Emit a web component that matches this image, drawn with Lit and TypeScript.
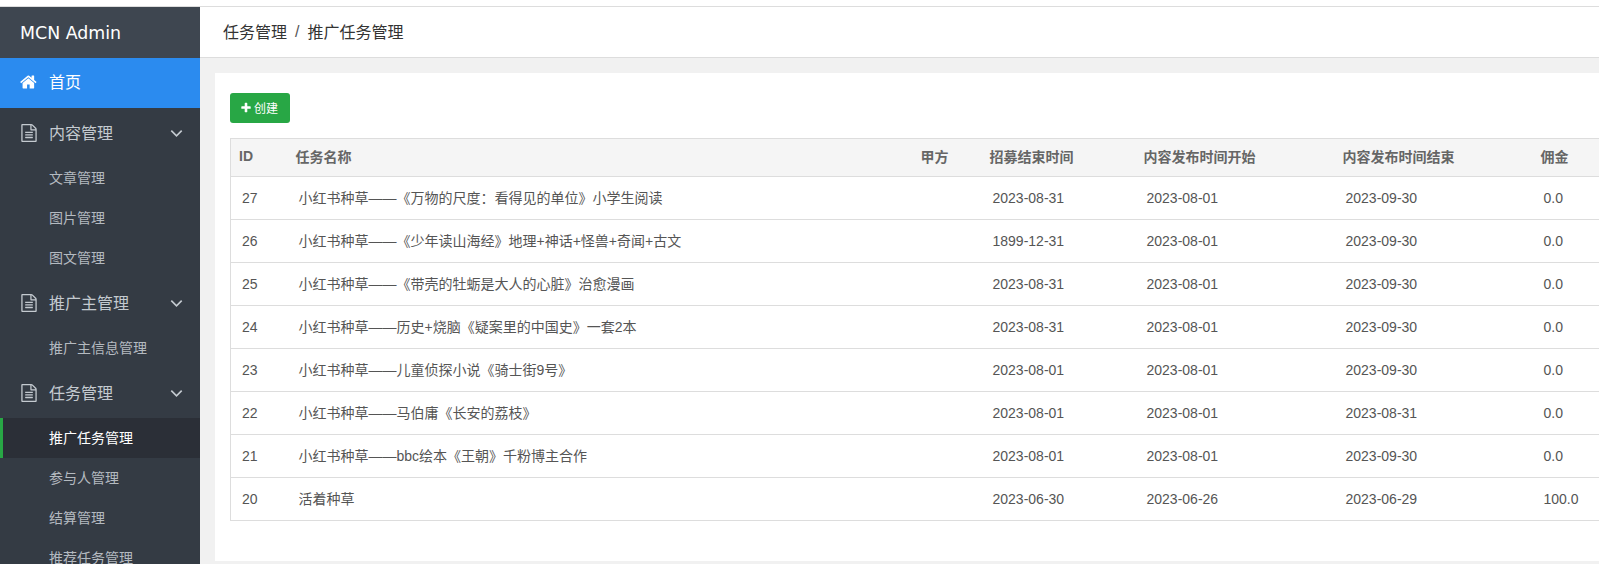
import { LitElement, html, css, svg } from "lit";
import { customElement } from "lit/decorators.js";

const HOME = "M1408 992v480q0 26-19 45t-45 19h-384v-384h-256v384h-384q-26 0-45-19t-19-45v-480q0-1 .5-3t.5-3l575-474 575 474q1 2 1 6zm223-69l-62 74q-8 9-21 11h-3q-13 0-21-7l-692-577-692 577q-12 8-24 7-13-2-21-11l-62-74q-8-10-7-23.5t11-21.5l719-599q32-26 76-26t76 26l244 204v-195q0-14 9-23t23-9h192q14 0 23 9t9 23v408l219 182q10 8 11 21.5t-7 23.5z";
const FILE = "M1596 380q28 28 48 76t20 88v1152q0 40-28 68t-68 28h-1344q-40 0-68-28t-28-68v-1600q0-40 28-68t68-28h896q40 0 88 20t76 48zm-444-244v376h376q-10-29-22-41l-313-313q-12-12-41-22zm384 1528v-1024h-416q-40 0-68-28t-28-68v-416h-768v1536h1280zm-1024-864q0-14 9-23t23-9h704q14 0 23 9t9 23v64q0 14-9 23t-23 9h-704q-14 0-23-9t-9-23v-64zm736 224q14 0 23 9t9 23v64q0 14-9 23t-23 9h-704q-14 0-23-9t-9-23v-64q0-14 9-23t23-9h704zm0 256q14 0 23 9t9 23v64q0 14-9 23t-23 9h-704q-14 0-23-9t-9-23v-64q0-14 9-23t23-9h704z";
const PLUS = "M1600 736v192q0 40-28 68t-68 28h-416v416q0 40-28 68t-68 28h-192q-40 0-68-28t-28-68v-416h-416q-40 0-68-28t-28-68v-192q0-40 28-68t68-28h416v-416q0-40 28-68t68-28h192q40 0 68 28t28 68v416h416q40 0 68 28t28 68z";

const icon = (d: string, cls: string) => html`<svg class=${cls} viewBox="0 0 1792 1792" aria-hidden="true">${svg`<path d=${d} fill="currentColor"></path>`}</svg>`;
const chevron = html`<svg class="chev" viewBox="0 0 12 8" aria-hidden="true">${svg`<path d="M1.2 1.4 6 6.2 10.8 1.4" fill="none" stroke="currentColor" stroke-width="1.5"></path>`}</svg>`;

const NAV = [
  { title: "内容管理", subs: ["文章管理", "图片管理", "图文管理"] },
  { title: "推广主管理", subs: ["推广主信息管理"] },
  { title: "任务管理", subs: ["推广任务管理", "参与人管理", "结算管理", "推荐任务管理"] },
];

const ROWS = [
  ["27", "小红书种草——《万物的尺度：看得见的单位》小学生阅读", "", "2023-08-31", "2023-08-01", "2023-09-30", "0.0"],
  ["26", "小红书种草——《少年读山海经》地理+神话+怪兽+奇闻+古文", "", "1899-12-31", "2023-08-01", "2023-09-30", "0.0"],
  ["25", "小红书种草——《带壳的牡蛎是大人的心脏》治愈漫画", "", "2023-08-31", "2023-08-01", "2023-09-30", "0.0"],
  ["24", "小红书种草——历史+烧脑《疑案里的中国史》一套2本", "", "2023-08-31", "2023-08-01", "2023-09-30", "0.0"],
  ["23", "小红书种草——儿童侦探小说《骑士街9号》", "", "2023-08-01", "2023-08-01", "2023-09-30", "0.0"],
  ["22", "小红书种草——马伯庸《长安的荔枝》", "", "2023-08-01", "2023-08-01", "2023-08-31", "0.0"],
  ["21", "小红书种草——bbc绘本《王朝》千粉博主合作", "", "2023-08-01", "2023-08-01", "2023-09-30", "0.0"],
  ["20", "活着种草", "", "2023-06-30", "2023-06-26", "2023-06-29", "100.0"],
];
const HEAD = ["ID", "任务名称", "甲方", "招募结束时间", "内容发布时间开始", "内容发布时间结束", "佣金"];
const WIDTHS = ["w-id", "w-name", "w-party", "w-rec", "w-start", "w-end", "w-fee"];

@customElement("app-root")
export class AppRoot extends LitElement {
  static styles = css`
    :host {
      display: flex;
      flex-direction: column;
      width: 1599px;
      height: 564px;
      overflow: hidden;
      background: #fff;
      font-family: "Liberation Sans", "Noto Sans CJK SC", sans-serif;
      color: #555;
    }
    .topgap { flex: none; height: 6px; background: #fff; border-bottom: 1px solid #ddd; }
    .shell { flex: 1; display: flex; min-height: 0; }
    .side { flex: none; width: 200px; background: #343b44; overflow: hidden; color: #c4cad0; }
    .logo {
      height: 51px;
      box-sizing: border-box;
      padding: 1px 0 0 20px;
      background: #3e4650;
      color: #fff;
      font: 17.4px/50px "DejaVu Sans", sans-serif;
    }
    .item {
      height: 50px;
      box-sizing: border-box;
      display: flex;
      align-items: center;
      padding: 0 0 2px 20px;
      font-size: 16px;
    }
    .item.home { background: #2b8bef; color: #fff; padding-bottom: 4px; }
    .i { width: 18px; height: 18px; flex: none; margin: 2px 11px 0 0; }
    .chev { width: 13px; height: 9px; margin: 2px 17px 0 auto; }
    .sub {
      height: 40px;
      box-sizing: border-box;
      display: flex;
      align-items: center;
      padding: 0 0 2px 49px;
      font-size: 14px;
      color: #b4bac0;
    }
    .sub.on { background: #2b2f37; color: #fff; border-left: 3px solid #28a745; padding-left: 46px; }
    .main { flex: 1; min-width: 0; display: flex; flex-direction: column; background: #f1f1f1; }
    .crumb {
      flex: none;
      height: 50px;
      box-sizing: content-box;
      background: #fff;
      border-bottom: 1px solid #ddd;
      display: flex;
      align-items: center;
      padding-left: 23px;
      font-size: 16px;
      color: #333;
    }
    .crumb span { position: relative; top: -1px; }
    .crumb .sep { margin: 0 8px; color: #555; top: 0; }
    .card { margin: 15px 0 3px 15px; flex: 1; background: #fff; padding: 20px 0 0 15px; overflow: hidden; }
    .btn {
      display: flex;
      align-items: center;
      gap: 2px;
      width: 60px;
      height: 30px;
      box-sizing: border-box;
      padding: 0 0 2px 10px;
      border: 0;
      border-radius: 3px;
      background: #28a745;
      color: #fff;
      font: 12px "Liberation Sans", "Noto Sans CJK SC", sans-serif;
    }
    .btn svg { width: 12px; height: 12px; margin-top: 2px; }
    table {
      margin-top: 15px;
      width: 1420px;
      table-layout: fixed;
      border-collapse: collapse;
      border: 1px solid #ddd;
      font-size: 14px;
    }
    .w-id { width: 57px; }
    .w-name { width: 625px; }
    .w-party { width: 69px; }
    .w-rec { width: 154px; }
    .w-start { width: 199px; }
    .w-end { width: 198px; }
    .w-fee { width: 118px; }
    th {
      height: 33px;
      padding: 0 0 4px 8px;
      text-align: left;
      background: #f5f5f5;
      font-weight: bold;
      color: #666;
      border-bottom: 1px solid #ddd;
      white-space: nowrap;
      box-sizing: content-box;
    }
    td {
      height: 42px;
      padding: 0 0 0 11px;
      border-bottom: 1px solid #ddd;
      color: #555;
      white-space: nowrap;
      box-sizing: content-box;
    }
    td.name { height: 40px; padding-bottom: 2px; }
  `;

  render() {
    return html`
      <div class="topgap"></div>
      <div class="shell">
        <nav class="side">
          <div class="logo">MCN Admin</div>
          <div class="item home">${icon(HOME, "i")}首页</div>
          ${NAV.map(
            (g) => html`
              <div class="item">${icon(FILE, "i")}${g.title}${chevron}</div>
              ${g.subs.map((s) => html`<div class="sub ${s === "推广任务管理" ? "on" : ""}">${s}</div>`)}
            `
          )}
        </nav>
        <div class="main">
          <div class="crumb"><span>任务管理</span><span class="sep">/</span><span>推广任务管理</span></div>
          <section class="card">
            <button class="btn">${icon(PLUS, "")}创建</button>
            <table>
              <colgroup>${WIDTHS.map((w) => html`<col class=${w} />`)}</colgroup>
              <thead><tr>${HEAD.map((h) => html`<th>${h}</th>`)}</tr></thead>
              <tbody>
                ${ROWS.map((r) => html`<tr>${r.map((c, i) => html`<td class=${i === 1 ? "name" : ""}>${c}</td>`)}</tr>`)}
              </tbody>
            </table>
          </section>
        </div>
      </div>
    `;
  }
}
